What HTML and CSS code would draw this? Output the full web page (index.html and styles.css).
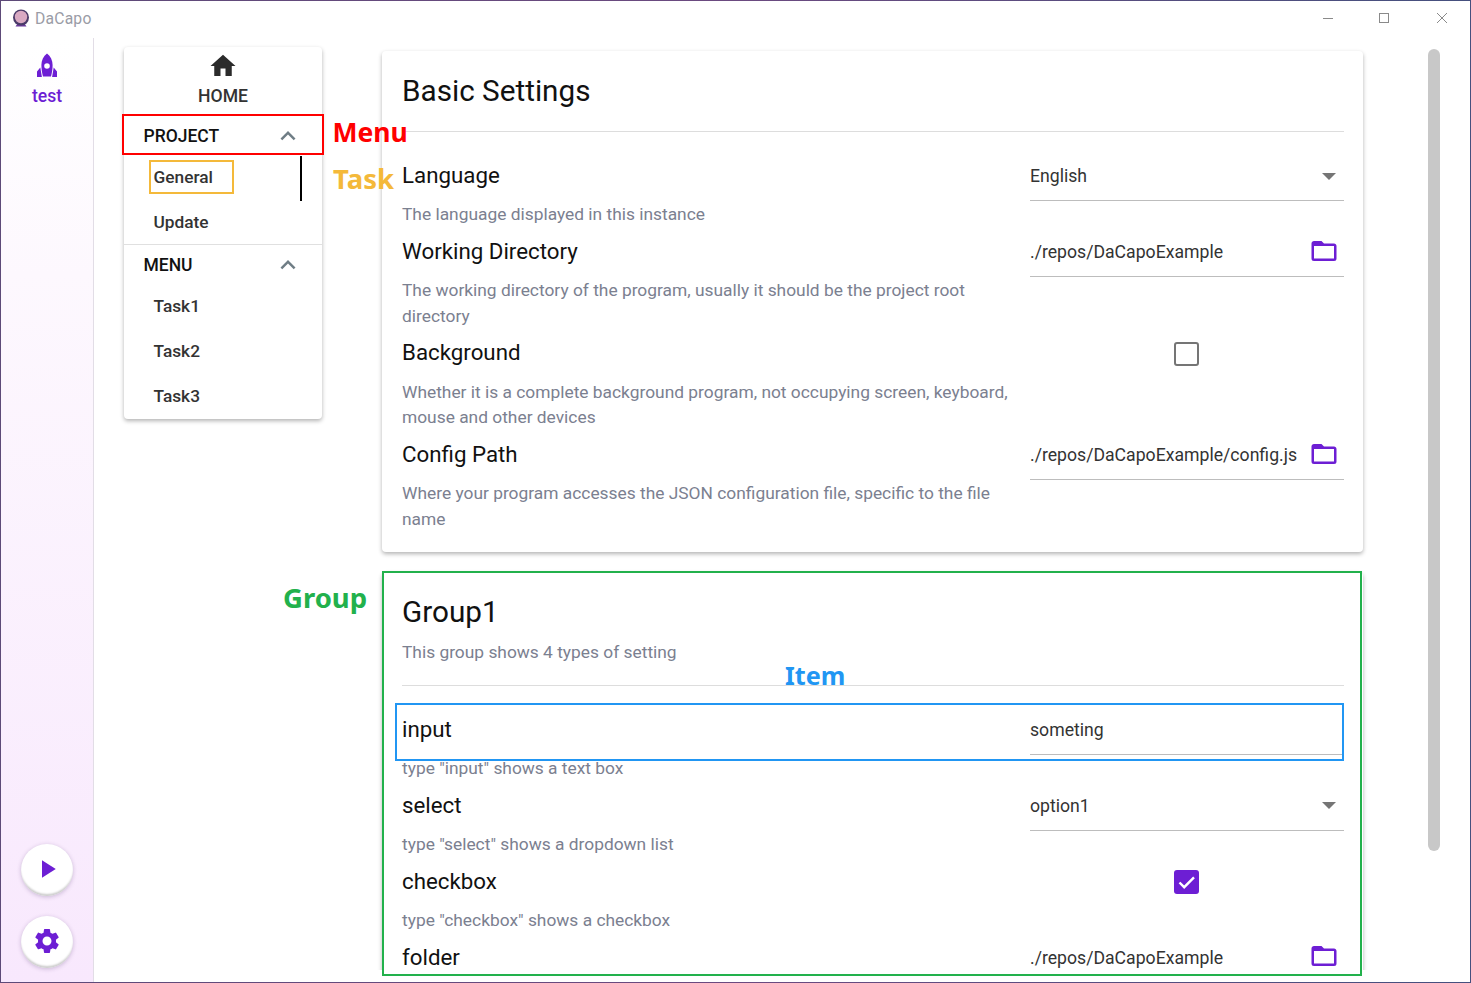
FILE: index.html
```html
<!DOCTYPE html>
<html lang="en">
<head>
    <meta charset="UTF-8">
    <meta name="viewport" content="width=device-width, initial-scale=1.0">
    <title>DaCapo</title>
    <link rel="stylesheet" href="styles.css">
</head>
<body>
    <div class="window">
        <header class="titlebar">
            <div class="app-name">
                <svg class="app-logo" viewBox="0 0 18 18" width="18" height="18">
                    <path d="M3.500 17.500h11l-2-3h-7z" fill="#6a3a9a"/>
                    <circle cx="9" cy="8.500" r="8" fill="#4a3a68"/>
                    <circle cx="9" cy="8" r="6.200" fill="#d9a9c2"/>
                </svg>
                <span>DaCapo</span>
            </div>
            <div class="window-controls">
                <button class="win-btn"><svg viewBox="0 0 12 12" width="12" height="12"><path d="M1 6.500h10" stroke="#8a8a8a" fill="none"/></svg></button>
                <button class="win-btn"><svg viewBox="0 0 12 12" width="12" height="12"><rect x="1.500" y="1.500" width="9" height="9" stroke="#8a8a8a" fill="none"/></svg></button>
                <button class="win-btn"><svg viewBox="0 0 12 12" width="12" height="12"><path d="M1 1l10 10M11 1L1 11" stroke="#8a8a8a" fill="none"/></svg></button>
            </div>
        </header>

        <div class="app-body">
            <aside class="sidebar">
                <div class="tab">
                    <svg class="rocket" viewBox="0 0 24 26" width="24" height="26">
                        <path fill-rule="evenodd" d="M12 .5c3.600 2.800 5.600 7 5.600 11.500 0 4-.6 8-1.600 11.500H8C7 20 6.400 16 6.400 12 6.400 7.500 8.400 3.300 12 .5zm0 9.700a2.800 2.800 0 1 0 0 5.600 2.800 2.800 0 0 0 0-5.600z"/>
                        <path d="M5.300 14.500L6.900 24H2v-5.500zM18.700 14.500L17.100 24H22v-5.500z"/>
                    </svg>
                    <span>test</span>
                </div>
                <div class="fab-group">
                    <button class="fab"><svg viewBox="0 0 24 24" width="30" height="30"><path d="M8 5v14l11-7z"/></svg></button>
                    <button class="fab"><svg viewBox="0 0 24 24" width="30" height="30"><path d="M19.140 12.940c.04-.3.060-.61.060-.94 0-.32-.02-.64-.07-.94l2.030-1.580a.49.49 0 0 0 .12-.61l-1.920-3.320a.488.488 0 0 0-.59-.22l-2.390.96c-.5-.38-1.030-.7-1.620-.94l-.36-2.540a.484.484 0 0 0-.48-.41h-3.840c-.24 0-.43.17-.47.41l-.36 2.540c-.59.24-1.130.57-1.620.94l-2.390-.96c-.22-.08-.47 0-.59.22L2.740 8.870c-.12.21-.08.47.12.61l2.030 1.580c-.05.3-.09.63-.09.94s.02.64.07.94l-2.030 1.580a.49.49 0 0 0-.12.61l1.920 3.320c.12.22.37.29.59.22l2.390-.96c.5.38 1.030.7 1.620.94l.36 2.540c.05.24.24.41.48.41h3.840c.24 0 .44-.17.47-.41l.36-2.540c.59-.24 1.130-.56 1.620-.94l2.390.96c.22.08.47 0 .59-.22l1.920-3.320c.12-.22.07-.47-.12-.61l-2.010-1.580zM12 15.600A3.610 3.610 0 0 1 8.400 12c0-1.980 1.620-3.600 3.600-3.600s3.600 1.620 3.600 3.600-1.620 3.600-3.600 3.600z"/></svg></button>
                </div>
            </aside>

            <main class="main">
                <nav class="nav-card">
                    <div class="nav-home">
                        <svg viewBox="0 0 24 24" width="30" height="30"><path d="M10 20v-6h4v6h5v-8h3L12 3 2 12h3v8z"/></svg>
                        <span>HOME</span>
                    </div>
                    <div class="nav-group">
                        <div class="nav-head">
                            <span>PROJECT</span>
                            <svg viewBox="0 0 24 24" width="30" height="30"><path d="M7.410 15.410L12 10.830l4.590 4.580L18 14l-6-6-6 6z"/></svg>
                        </div>
                        <div class="nav-item">General</div>
                        <div class="nav-item">Update</div>
                    </div>
                    <div class="nav-group">
                        <div class="nav-head">
                            <span>MENU</span>
                            <svg viewBox="0 0 24 24" width="30" height="30"><path d="M7.410 15.410L12 10.830l4.590 4.580L18 14l-6-6-6 6z"/></svg>
                        </div>
                        <div class="nav-item">Task1</div>
                        <div class="nav-item">Task2</div>
                        <div class="nav-item">Task3</div>
                    </div>
                </nav>

                <div class="content">
                    <section class="card">
                        <div class="card-head">
                            <h2>Basic Settings</h2>
                        </div>
                        <div class="setting">
                            <div class="setting-title">Language</div>
                            <div class="field">
                                <span>English</span>
                                <span class="caret"></span>
                            </div>
                            <p class="setting-desc">The language displayed in this instance</p>
                        </div>
                        <div class="setting">
                            <div class="setting-title">Working Directory</div>
                            <div class="field">
                                <span>./repos/DaCapoExample</span>
                                <svg class="folder" viewBox="0 0 24 24" width="30" height="30"><path d="M20 18H4V8h16M20 6h-8l-2-2H4c-1.110 0-2 .89-2 2v12a2 2 0 0 0 2 2h16a2 2 0 0 0 2-2V8c0-1.110-.9-2-2-2z"/></svg>
                            </div>
                            <p class="setting-desc">The working directory of the program, usually it should be the project root directory</p>
                        </div>
                        <div class="setting">
                            <div class="setting-title">Background</div>
                            <div class="field field-check"><span class="checkbox"></span></div>
                            <p class="setting-desc">Whether it is a complete background program, not occupying screen, keyboard, mouse and other devices</p>
                        </div>
                        <div class="setting">
                            <div class="setting-title">Config Path</div>
                            <div class="field">
                                <span>./repos/DaCapoExample/config.js</span>
                                <svg class="folder" viewBox="0 0 24 24" width="30" height="30"><path d="M20 18H4V8h16M20 6h-8l-2-2H4c-1.110 0-2 .89-2 2v12a2 2 0 0 0 2 2h16a2 2 0 0 0 2-2V8c0-1.110-.9-2-2-2z"/></svg>
                            </div>
                            <p class="setting-desc">Where your program accesses the JSON configuration file, specific to the file name</p>
                        </div>
                    </section>

                    <section class="card">
                        <div class="card-head card-head-desc">
                            <h2>Group1</h2>
                            <p class="setting-desc">This group shows 4 types of setting</p>
                        </div>
                        <div class="setting">
                            <div class="setting-title">input</div>
                            <div class="field"><span>someting</span></div>
                            <p class="setting-desc">type "input" shows a text box</p>
                        </div>
                        <div class="setting">
                            <div class="setting-title">select</div>
                            <div class="field">
                                <span>option1</span>
                                <span class="caret"></span>
                            </div>
                            <p class="setting-desc">type "select" shows a dropdown list</p>
                        </div>
                        <div class="setting">
                            <div class="setting-title">checkbox</div>
                            <div class="field field-check">
                                <span class="checkbox checked">
                                    <svg viewBox="0 0 24 24" width="25" height="24"><path d="M5 12.500l4.700 4.700L19.500 7.400" fill="none" stroke="#fff" stroke-width="2.400"/></svg>
                                </span>
                            </div>
                            <p class="setting-desc">type "checkbox" shows a checkbox</p>
                        </div>
                        <div class="setting">
                            <div class="setting-title">folder</div>
                            <div class="field">
                                <span>./repos/DaCapoExample</span>
                                <svg class="folder" viewBox="0 0 24 24" width="30" height="30"><path d="M20 18H4V8h16M20 6h-8l-2-2H4c-1.110 0-2 .89-2 2v12a2 2 0 0 0 2 2h16a2 2 0 0 0 2-2V8c0-1.110-.9-2-2-2z"/></svg>
                            </div>
                        </div>
                    </section>
                </div>

                <div class="scrollbar"><div class="scroll-thumb"></div></div>
            </main>
        </div>

        <!-- annotations drawn over the app -->
        <div class="mark mark-menu"></div>
        <div class="mark mark-task"></div>
        <div class="mark mark-line"></div>
        <div class="mark mark-group"></div>
        <div class="mark mark-item"></div>
        <div class="label label-menu">Menu</div>
        <div class="label label-task">Task</div>
        <div class="label label-group">Group</div>
        <div class="label label-item">Item</div>
    </div>
</body>
</html>
```

FILE: styles.css
```css
* {
    box-sizing: border-box;
}
body {
    margin: 0;
    height: 983px;
    padding: 1px;
    overflow: hidden;
    font-family: Roboto, Arial, sans-serif;
    background: linear-gradient(90deg, #5d4a78 0%, #6b4a80 50%, #45507e 100%);
}
.window {
    position: relative;
    height: 981px;
    background-color: #fff;
    overflow: hidden;
}
.titlebar {
    display: flex;
    align-items: flex-start;
    justify-content: space-between;
    height: 37px;
}
.app-name {
    display: flex;
    align-items: center;
    gap: 5px;
    height: 34px;
    padding-left: 11px;
    font-size: 15.7px;
    letter-spacing: 0.2px;
    color: #9a9ca6;
}
.window-controls {
    display: flex;
}
.win-btn {
    display: flex;
    align-items: center;
    justify-content: center;
    width: 56px;
    height: 34px;
    padding: 0;
    border: none;
    background: none;
}
.win-btn:last-child {
    margin-left: 2px;
}
.app-body {
    display: flex;
    height: 944px;
}
.sidebar {
    display: flex;
    flex-direction: column;
    justify-content: space-between;
    align-items: center;
    width: 93px;
    padding: 15px 0 14px;
    flex-shrink: 0;
    border-right: 1px solid #e2dde6;
    background: linear-gradient(180deg, #fff 0%, #fdf8fe 25%, #f8e8fd 100%);
}
.tab {
    display: flex;
    flex-direction: column;
    align-items: center;
    font-size: 17.6px;
    font-weight: 500;
    color: #6d1ed4;
}
.tab span {
    margin-top: 7px;
}
.rocket {
    fill: #6d1ed4;
}
.fab-group {
    display: flex;
    flex-direction: column;
    gap: 20px;
}
.fab {
    display: flex;
    align-items: center;
    justify-content: center;
    width: 52px;
    height: 52px;
    padding: 0 0 2px;
    border: none;
    border-radius: 50%;
    background-color: #fff;
    box-shadow: inset 0 -3px 2px -1px #cdcdcd, 0 1px 4px rgba(60,30,90,0.25);
}
.fab svg {
    fill: #6d1ed4;
}
.main {
    display: flex;
    align-items: flex-start;
    flex: 1;
    height: 932px;
    overflow: hidden;
    padding-left: 30px;
}
.nav-card {
    width: 198px;
    flex-shrink: 0;
    margin-top: 9px;
    padding-bottom: 1px;
    border-radius: 4px;
    background-color: #fff;
    box-shadow: 0 2px 4px rgba(0,0,0,0.3);
}
.nav-home {
    display: flex;
    flex-direction: column;
    align-items: center;
    height: 69px;
    padding-top: 4px;
    border-bottom: 1px solid #ddd;
    font-size: 17.6px;
    font-weight: 500;
    color: #333;
}
.nav-home svg {
    fill: #2b2b2b;
}
.nav-home span {
    margin-top: 5px;
}
.nav-group + .nav-group {
    border-top: 1px solid #e0e0e0;
}
.nav-group:first-of-type .nav-head {
    height: 39px;
    padding-top: 1px;
}
.nav-group:first-of-type .nav-item:last-child {
    height: 44px;
}
.nav-head {
    display: flex;
    align-items: center;
    justify-content: space-between;
    height: 38px;
    padding: 2px 19px 0 19.5px;
    font-size: 17.5px;
    font-weight: 500;
    color: #111;
}
.nav-head svg {
    fill: #6f7d85;
}
.nav-item {
    display: flex;
    align-items: center;
    height: 45px;
    padding-left: 29.500px;
    font-size: 17.3px;
    font-weight: 500;
    color: #333;
}
.content {
    width: 981px;
    flex-shrink: 0;
    margin-top: 13px;
    margin-left: 60px;
}
.card {
    margin-bottom: 20px;
    padding: 0 19px 20.35px 20px;
    border-radius: 4px;
    background-color: #fff;
    box-shadow: 0 2px 4px rgba(0,0,0,0.3);
}
.card-head {
    margin-bottom: 19px;
    padding-top: 20px;
    padding-bottom: 20px;
    border-bottom: 1px solid #ddd;
}
.card-head h2 {
    margin: 0;
    height: 40px;
    line-height: 40px;
    font-size: 29.7px;
    font-weight: 400;
    color: #111;
}
.card-head-desc {
    margin-bottom: 18.85px;
    padding-bottom: 19.6px;
}
.card-head-desc .setting-desc {
    margin: 8px 0 0;
    padding: 0;
}
.setting {
    display: grid;
    grid-template-columns: 1fr 314px;
    column-gap: 16px;
}
.setting-title {
    line-height: 49.4px;
    font-size: 22.3px;
    color: #111;
}
.setting-desc {
    grid-column: 1;
    margin: 0 0 -1px;
    padding-top: 1px;
    line-height: 25.55px;
    font-size: 17.36px;
    color: #7b8090;
}
.field {
    grid-column: 2;
    grid-row: 1 / span 1;
    display: flex;
    align-items: center;
    justify-content: space-between;
    height: 50.4px;
    padding: 1px 7px 0 0;
    border-bottom: 1px solid #bdbdbd;
    font-size: 17.65px;
    color: #333;
}
.field-check {
    justify-content: flex-start;
    padding: 1px 0 0 144px;
    border-bottom: none;
}
.caret {
    width: 0;
    height: 0;
    margin-right: 1px;
    border-left: 7px solid transparent;
    border-right: 7px solid transparent;
    border-top: 7px solid #757575;
}
.folder {
    fill: #6d1ed4;
    margin: -3px -2px 0 0;
}
.checkbox {
    display: block;
    width: 25px;
    height: 24px;
    border: 2px solid #757575;
    border-radius: 3px;
}
.checkbox.checked {
    border: none;
    background-color: #6d1ed4;
}
.checkbox svg {
    display: block;
}
.scrollbar {
    width: 12px;
    flex-shrink: 0;
    margin-top: 11px;
    margin-left: 65px;
}
.scroll-thumb {
    height: 802px;
    border-radius: 6px;
    background-color: #c8c8c8;
}
/* window coords are page coords minus the 1px body padding */
.mark {
    position: absolute;
}
.mark-menu {
    left: 121px;
    top: 113px;
    width: 202px;
    height: 41px;
    border: 2px solid #f00;
}
.mark-task {
    left: 148px;
    top: 159px;
    width: 85px;
    height: 34px;
    border: 2px solid #f4b93a;
}
.mark-line {
    left: 299px;
    top: 155px;
    width: 2px;
    height: 45px;
    background-color: #000;
}
.mark-group {
    left: 381px;
    top: 570px;
    width: 980px;
    height: 405px;
    border: 2px solid #22b14c;
}
.mark-item {
    left: 394px;
    top: 702px;
    width: 949px;
    height: 58px;
    border: 2px solid #2196f3;
}
.label {
    position: absolute;
    font-family: "Noto Sans", sans-serif;
    font-size: 26px;
    font-weight: 700;
    line-height: 36px;
}
.label-menu {
    left: 331.5px;
    top: 113px;
    font-size: 26.500px;
    color: #f00;
}
.label-task {
    left: 332px;
    top: 160px;
    font-size: 27.500px;
    color: #f4b93a;
}
.label-group {
    left: 282px;
    top: 579px;
    font-size: 27.500px;
    color: #22b14c;
}
.label-item {
    left: 784px;
    top: 656px;
    font-size: 25.200px;
    color: #2196f3;
}
```
